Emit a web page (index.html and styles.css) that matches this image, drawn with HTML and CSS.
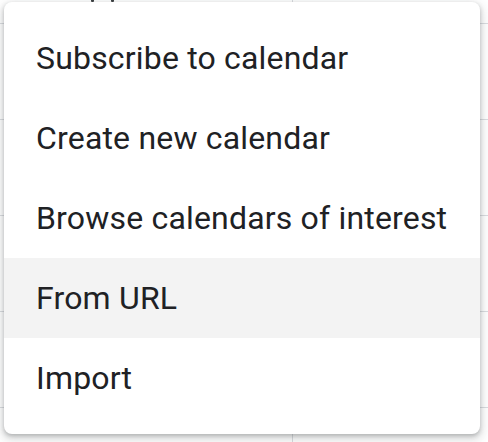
FILE: index.html
```html
<!DOCTYPE html>
<html>
<head>
<meta charset="utf-8">
<link rel="stylesheet" href="styles.css">
</head>
<body>
<div class="backdrop">
  <span class="tail tail-a"></span>
  <span class="tail tail-b"></span>
</div>
<div class="menu">
  <div class="item">Subscribe to calendar</div>
  <div class="item">Create new calendar</div>
  <div class="item">Browse calendars of interest</div>
  <div class="item active">From URL</div>
  <div class="item">Import</div>
</div>
</body>
</html>
```
FILE: styles.css
```css
html, body {
  margin: 0;
  padding: 0;
}
body {
  width: 488px;
  height: 442px;
  overflow: hidden;
  position: relative;
  font-family: Roboto, "Liberation Sans", sans-serif;
  background: #fff;
}
.backdrop {
  width: 488px;
  height: 442px;
  position: relative;
  background-image:
    linear-gradient(to right, transparent 292px, #dadce0 292px, #dadce0 293px, transparent 293px),
    repeating-linear-gradient(to bottom, transparent 0, transparent 23px, #dadce0 23px, #dadce0 24px, transparent 24px, transparent 96px);
}
.tail {
  position: absolute;
  top: 0;
  width: 3px;
  height: 2px;
  background: #3c4043;
  border-radius: 0 0 1px 1px;
}
.tail-a { left: 91px; }
.tail-b { left: 111px; }
.menu {
  position: absolute;
  left: 4px;
  top: 2px;
  width: 476px;
  padding: 16px 0;
  background: #fff;
  border-radius: 8px;
  box-shadow: 0 4px 10px 3px rgba(60, 64, 67, 0.15), 0 2px 4px rgba(60, 64, 67, 0.3);
}
.item {
  height: 80px;
  display: flex;
  align-items: center;
  padding: 0 32px;
  font-size: 32px;
  letter-spacing: 0.18px;
  color: #202124;
  white-space: nowrap;
}
.item.active {
  background: #f3f3f3;
}
```
